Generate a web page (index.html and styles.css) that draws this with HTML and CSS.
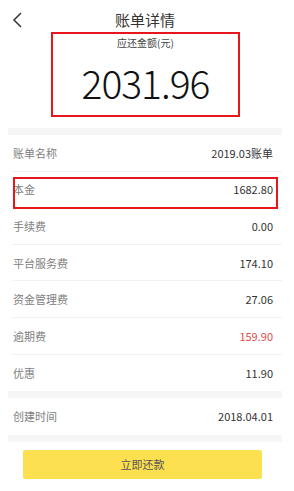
FILE: index.html
```html
<!DOCTYPE html>
<html>
<head>
  <meta charset="utf-8">
  <title>账单详情</title>
  <link rel="stylesheet" href="styles.css">
</head>
<body>

<div class="page">
  <div class="header">
    <svg class="back" width="12" height="16" viewBox="0 0 12 16">
      <path d="M9 1 L2 8 L9 15" fill="none" stroke="#333" stroke-width="1.5"/>
    </svg>
    <div class="title">账单详情</div>
  </div>

  <div class="amount-box">
    <div class="amount-label">应还金额(元)</div>
    <div class="amount">2031.96</div>
  </div>

  <div class="band"></div>

  <div class="list">
    <div class="row"><span class="label">账单名称</span><span class="value">2019.03账单</span></div>
    <div class="row"><span class="label">本金</span><span class="value">1682.80</span><span class="mark"></span></div>
    <div class="row"><span class="label">手续费</span><span class="value">0.00</span></div>
    <div class="row"><span class="label">平台服务费</span><span class="value">174.10</span></div>
    <div class="row"><span class="label">资金管理费</span><span class="value">27.06</span></div>
    <div class="row"><span class="label">逾期费</span><span class="value red">159.90</span></div>
    <div class="row last"><span class="label">优惠</span><span class="value">11.90</span></div>
  </div>

  <div class="band"></div>

  <div class="list">
    <div class="row last"><span class="label">创建时间</span><span class="value">2018.04.01</span></div>
  </div>

  <div class="band"></div>

  <button class="pay-btn">立即还款</button>
  <svg class="ret" width="8" height="7" viewBox="0 0 8 7">
    <path d="M7 0 V4 H1 M3 2 L1 4 L3 6" fill="none" stroke="#555" stroke-width="0.8"/>
  </svg>
</div>

</body>
</html>
```

FILE: styles.css
```css
body {
  margin: 0;
  background-color: #fff;
  font-family: "Noto Sans CJK SC", "Noto Sans", sans-serif;
  color: #333;
}

.page {
  position: relative;
  width: 274px;
  margin-left: 8px;
}

.header {
  position: relative;
  height: 32px;
}

.back {
  position: absolute;
  left: 4px;
  top: 12px;
}

.title {
  text-align: center;
  font-size: 15px;
  line-height: 20px;
  padding-top: 10px;
  color: #333;
}

.amount-box {
  width: 189px;
  height: 85px;
  box-sizing: border-box;
  margin-left: 43px;
  border: 2px solid #e8161b;
  text-align: center;
}

.amount-label {
  font-size: 10px;
  line-height: 14px;
  margin-top: 2px;
  color: #444;
}

.amount {
  font-size: 39px;
  line-height: 48px;
  margin-top: 8px;
  color: #111;
  letter-spacing: -1px;
  font-weight: 300;
}

.band {
  height: 7px;
  background-color: #f6f6f6;
}

.amount-box + .band {
  margin-top: 11px;
}

.list {
  padding-left: 5px;
}

.row {
  position: relative;
  display: flex;
  justify-content: space-between;
  align-items: center;
  height: 36.6px;
  box-sizing: border-box;
  border-bottom: 1px solid #f0f0f0;
  padding-right: 9px;
  font-size: 11px;
}

.row.last {
  border-bottom: none;
}

.list:last-of-type .row {
  height: 37px;
}

.label {
  color: #808080;
}

.value {
  color: #333;
}

.value.red {
  color: #e24b4b;
}

.mark {
  position: absolute;
  left: 0;
  right: 4px;
  top: 5px;
  bottom: -2px;
  border: 2px solid #e8161b;
}

.pay-btn {
  display: block;
  width: 239px;
  height: 29px;
  margin: 8px 0 0 15px;
  background-color: #fde04f;
  border: none;
  border-radius: 2px;
  font-family: inherit;
  font-size: 11px;
  color: #555;
}

.ret {
  position: absolute;
  left: 275px;
  top: 481px;
}
```
